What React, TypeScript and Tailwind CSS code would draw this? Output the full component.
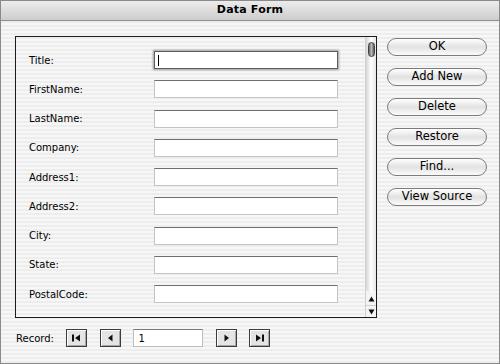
import React from 'react';

const fields = ["Title:", "FirstName:", "LastName:", "Company:", "Address1:", "Address2:", "City:", "State:", "PostalCode:"];
const actions = ["OK", "Add New", "Delete", "Restore", "Find...", "View Source"];

const stripes = "bg-[image:repeating-linear-gradient(to_bottom,#ededed_0px,#ededed_2px,#f7f7f7_2px,#f7f7f7_4px)]";

const NavButton: React.FC<{ kind: 'first' | 'prev' | 'next' | 'last' }> = ({ kind }) => (
    <button className="w-[21px] h-[18px] border border-[#3c3c3c] bg-[#e4e4e4] shadow-[inset_1px_1px_0_#ffffff,inset_-1px_-1px_0_#a8a8a8] flex items-center justify-center">
        <svg width="11" height="8" viewBox="0 0 11 8">
            {kind === 'first' && (<><rect x="1" y="0.5" width="2" height="7" fill="#111" /><path d="M9 0.5 L4 4 L9 7.5 Z" fill="#111" /></>)}
            {kind === 'prev' && <path d="M7.5 0.5 L3 4 L7.5 7.5 Z" fill="#111" />}
            {kind === 'next' && <path d="M3.5 0.5 L8 4 L3.5 7.5 Z" fill="#111" />}
            {kind === 'last' && (<><path d="M2 0.5 L7 4 L2 7.5 Z" fill="#111" /><rect x="8" y="0.5" width="2" height="7" fill="#111" /></>)}
        </svg>
    </button>
);

const App: React.FC = () => {
    return (
        <div className={`w-[500px] h-[364px] border border-[#8a8a8a] flex flex-col ${stripes} font-['DejaVu_Sans',sans-serif] text-black`}>
            <div className="h-[20px] shrink-0 border-b border-[#8f8f8f] bg-gradient-to-b from-[#ececec] to-[#cdcdcd] flex items-center justify-center">
                <span className="text-[11px] font-bold tracking-[0.2px]">Data Form</span>
            </div>

            <div className="flex pl-[14px] pt-[15px]">
                <div className={`w-[362px] h-[282px] border border-[#1c1c1c] flex ${stripes}`}>
                    <div className="flex-1 flex flex-col pt-[14px] pl-[13px] gap-[11.25px]">
                        {fields.map((f, i) => (
                            <div key={f} className="flex items-center h-[18px]">
                                <span className="w-[125px] text-[10px]">{f}</span>
                                {i === 0 ? (
                                    <div className="w-[184px] h-[18px] bg-white border border-[#5e5e5e] shadow-[0_0_2px_1px_#9a9a9a] flex items-center pl-[3px]">
                                        <div className="w-px h-[11px] bg-black" />
                                    </div>
                                ) : (
                                    <div className="w-[184px] h-[18px] bg-white border border-[#c4c4c4] border-t-[#6e6e6e]" />
                                )}
                            </div>
                        ))}
                    </div>
                    <div className="w-[11px] flex flex-col border-l border-[#d0d0d0]">
                        <div className="flex-1 bg-gradient-to-r from-[#d6d6d6] via-white to-[#e6e6e6] rounded-b-[5px] pt-[5px] flex justify-center">
                            <div className="w-[7px] h-[15px] rounded-full border border-[#3e3e3e] bg-gradient-to-r from-[#6a6a6a] via-[#b8b8b8] to-[#5a5a5a]" />
                        </div>
                        <div className="h-[24px] flex flex-col items-center justify-around py-[1px] bg-[#f4f4f4]">
                            <svg width="7" height="6" viewBox="0 0 7 6"><path d="M3.5 0.5 L6.5 5.5 L0.5 5.5 Z" fill="#111" /></svg>
                            <div className="w-full h-px bg-[#cfcfcf]" />
                            <svg width="7" height="6" viewBox="0 0 7 6"><path d="M0.5 0.5 L6.5 0.5 L3.5 5.5 Z" fill="#111" /></svg>
                        </div>
                    </div>
                </div>

                <div className="ml-[10px] pt-[2px] flex flex-col gap-[12px]">
                    {actions.map(a => (
                        <button key={a} className="w-[100px] h-[18px] rounded-full border border-[#7c7c7c] bg-gradient-to-b from-white via-[#e2e2e2] to-[#fbfbfb] text-[11.5px] leading-none flex items-center justify-center">
                            {a}
                        </button>
                    ))}
                </div>
            </div>

            <div className="flex items-center gap-[12.5px] pl-[15px] mt-[11px]">
                <span className="text-[10px]">Record:</span>
                <NavButton kind="first" />
                <NavButton kind="prev" />
                <div className="w-[70px] h-[18px] bg-white border border-[#bdbdbd] border-t-[#7a7a7a] text-[10px] flex items-center pl-[4px]">1</div>
                <NavButton kind="next" />
                <NavButton kind="last" />
            </div>
        </div>
    );
};

export default App;
